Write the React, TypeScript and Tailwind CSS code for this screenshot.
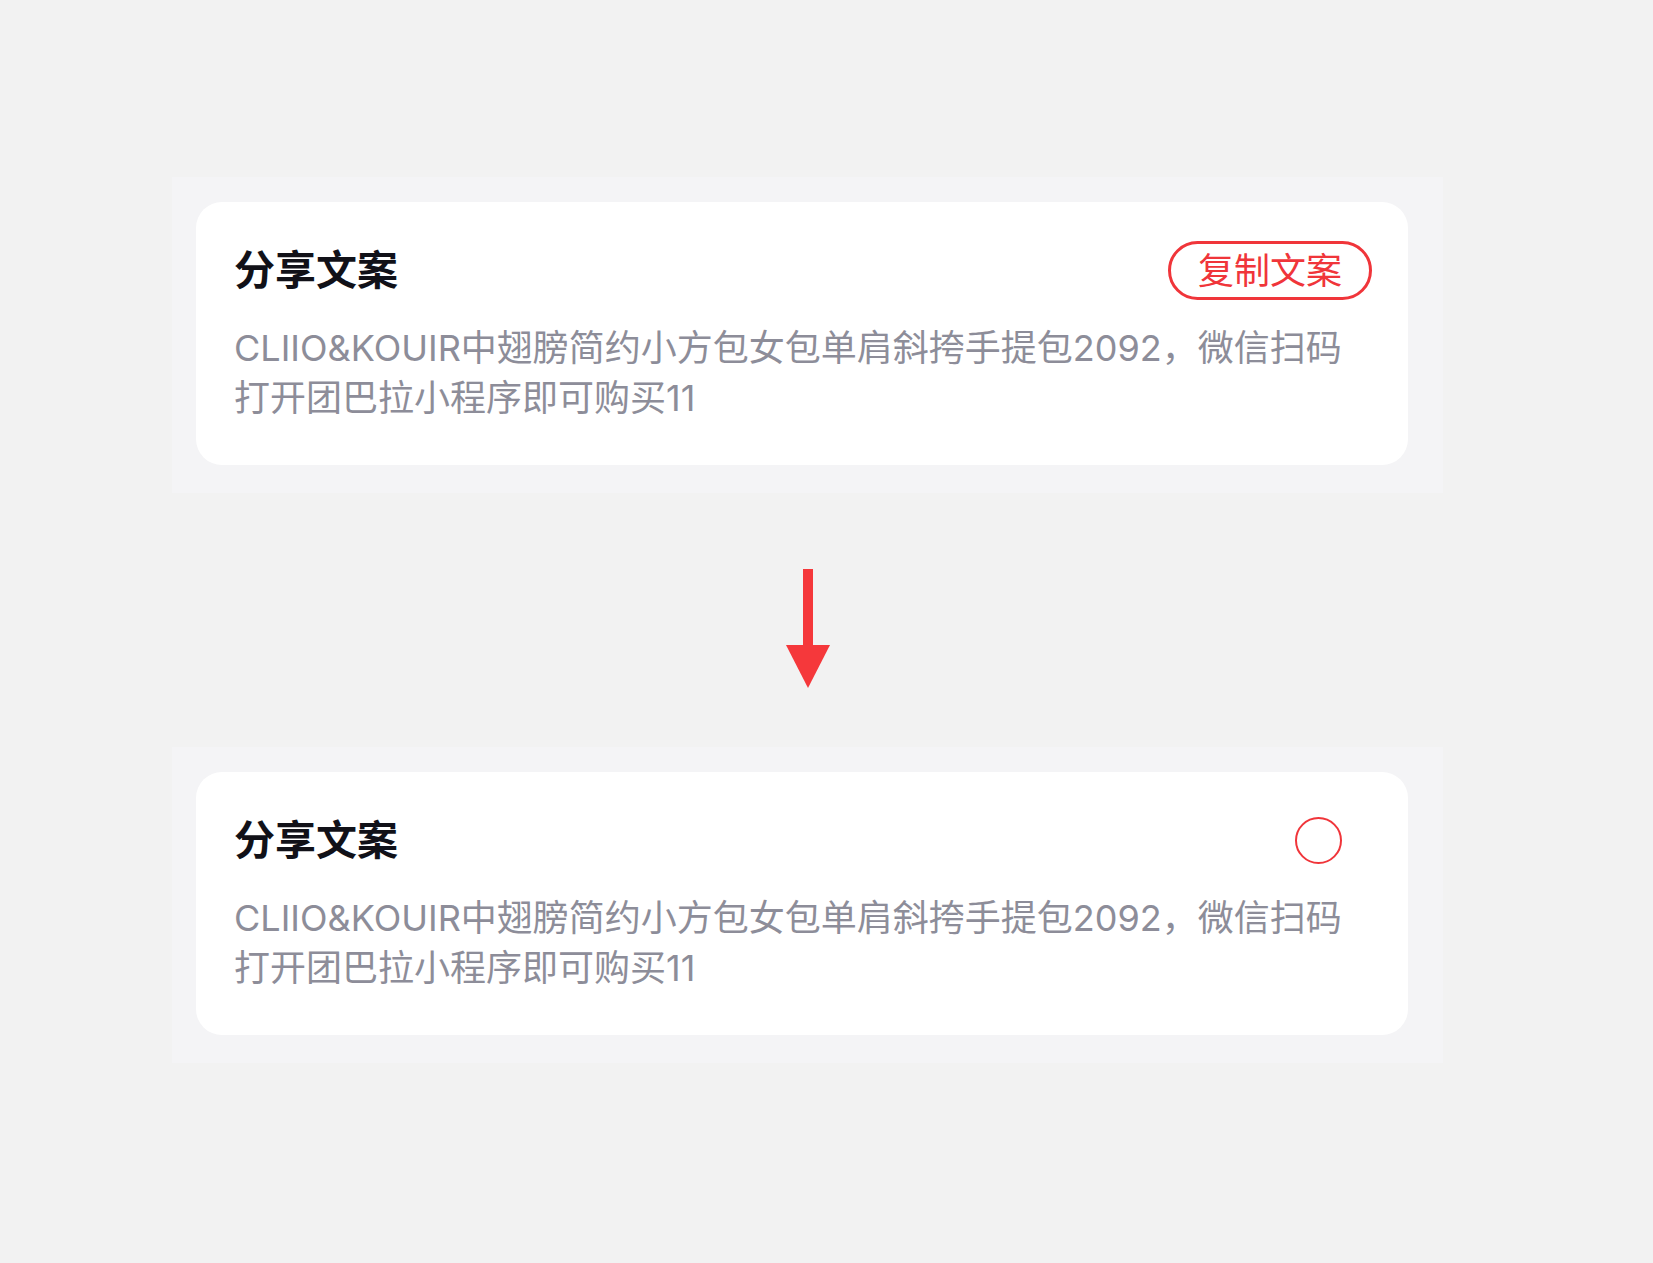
import React from "react";

const COPY_TEXT =
  "CLIIO&KOUIR中翅膀简约小方包女包单肩斜挎手提包2092，微信扫码打开团巴拉小程序即可购买11";

function ShareCard({ action }: { action: "button" | "circle" }) {
  return (
    <div className="bg-[#f4f4f6] w-[1271px] pt-[25px] pb-[28px] pl-[24px] pr-[35px]">
      <div className="bg-white rounded-[26px] pl-[38px] pr-[36px] pt-[39px] pb-[42px]">
        {/* Header */}
        <div className="flex items-center justify-between h-[59px]">
          <h2 className="text-[41px] font-bold text-[#111118] leading-none">分享文案</h2>
          {action === "button" ? (
            <button className="h-[59px] px-[27px] rounded-full border-[3px] border-[#f0353a] text-[#f0353a] text-[36px] leading-none">
              复制文案
            </button>
          ) : (
            <span className="w-[47px] h-[47px] rounded-full border-2 border-[#f0353a] mr-[30px]"></span>
          )}
        </div>

        {/* Body */}
        <p className="mt-[23px] text-[36px] leading-[50px] text-[#8d8d99]">{COPY_TEXT}</p>
      </div>
    </div>
  );
}

export default function App() {
  return (
    <div
      className="min-h-screen bg-[#f2f2f2] pt-[177px] pl-[172px]"
      style={{ fontFamily: 'Inter, "Noto Sans CJK SC", sans-serif' }}
    >
      <ShareCard action="button" />

      {/* Arrow */}
      <div className="w-[1271px] flex justify-center mt-[76px] mb-[59px]">
        <svg width="44" height="119" viewBox="0 0 44 119">
          <rect x="17" y="0" width="10" height="78" fill="#f5383b" />
          <polygon points="0,76 44,76 22,119" fill="#f5383b" />
        </svg>
      </div>

      <ShareCard action="circle" />
    </div>
  );
}
